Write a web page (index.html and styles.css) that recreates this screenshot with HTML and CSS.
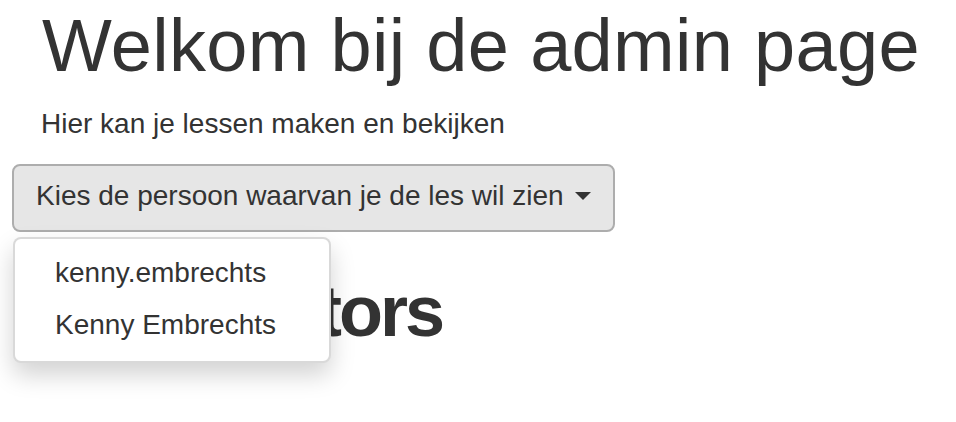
FILE: index.html
```html
<!DOCTYPE html>
<html lang="nl">
<head>
<meta charset="utf-8">
<title>Admin</title>
<link rel="stylesheet" href="styles.css">
</head>
<body>
<div class="page">
  <div class="intro">
    <h1 class="title">Welkom bij de admin page</h1>
    <p class="lead">Hier kan je lessen maken en bekijken</p>
  </div>
  <div class="dropdown">
    <button class="btn" type="button">Kies de persoon waarvan je de les wil zien <span class="caret"></span></button>
    <ul class="menu">
      <li><a href="#">kenny.embrechts</a></li>
      <li><a href="#">Kenny Embrechts</a></li>
    </ul>
  </div>
  <h1 class="section">Moderators</h1>
</div>
</body>
</html>
```
FILE: styles.css
```css
html, body {
  margin: 0;
  padding: 0;
  background: #fff;
}
body {
  font-family: "Liberation Sans", Arial, sans-serif;
  color: #333;
  font-size: 28px;
  line-height: 40px;
  min-height: 422px;
}
.page {
  padding: 6px 12px 80px 12px;
}
.intro {
  padding-left: 30px;
}
.title {
  margin: 0;
  font-size: 74px;
  line-height: 80px;
  font-weight: normal;
  letter-spacing: 0.3px;
}
.lead {
  margin: 18px 0 0 -1px;
  font-size: 28px;
  line-height: 40px;
}
.dropdown {
  position: relative;
  margin-top: 20px;
  display: inline-block;
}
.btn {
  display: block;
  box-sizing: border-box;
  height: 68px;
  margin: 0;
  padding: 10px 22px 14px 22px;
  font-family: "Liberation Sans", Arial, sans-serif;
  font-size: 28px;
  line-height: 40px;
  color: #333;
  background: #e6e6e6;
  border: 2px solid #adadad;
  border-radius: 8px;
  white-space: nowrap;
}
.caret {
  display: inline-block;
  width: 0;
  height: 0;
  margin-left: 4px;
  vertical-align: middle;
  border-top: 8px solid #333;
  border-left: 8px solid transparent;
  border-right: 8px solid transparent;
  position: relative;
  top: -2px;
}
.menu {
  position: absolute;
  top: 100%;
  left: 1px;
  z-index: 10;
  box-sizing: border-box;
  width: 318px;
  margin: 5px 0 0 0;
  padding: 8px 0 10px 0;
  list-style: none;
  background: #fff;
  border: 2px solid rgba(0, 0, 0, 0.15);
  border-radius: 8px;
  box-shadow: 0 12px 24px rgba(0, 0, 0, 0.175);
}
.menu a {
  display: block;
  padding: 6px 40px;
  line-height: 40px;
  font-size: 28px;
  color: #333;
  text-decoration: none;
  white-space: nowrap;
}
.section {
  margin: 40px 0 0 68px;
  font-size: 72px;
  line-height: 79px;
  font-weight: bold;
  letter-spacing: -3px;
}
```
